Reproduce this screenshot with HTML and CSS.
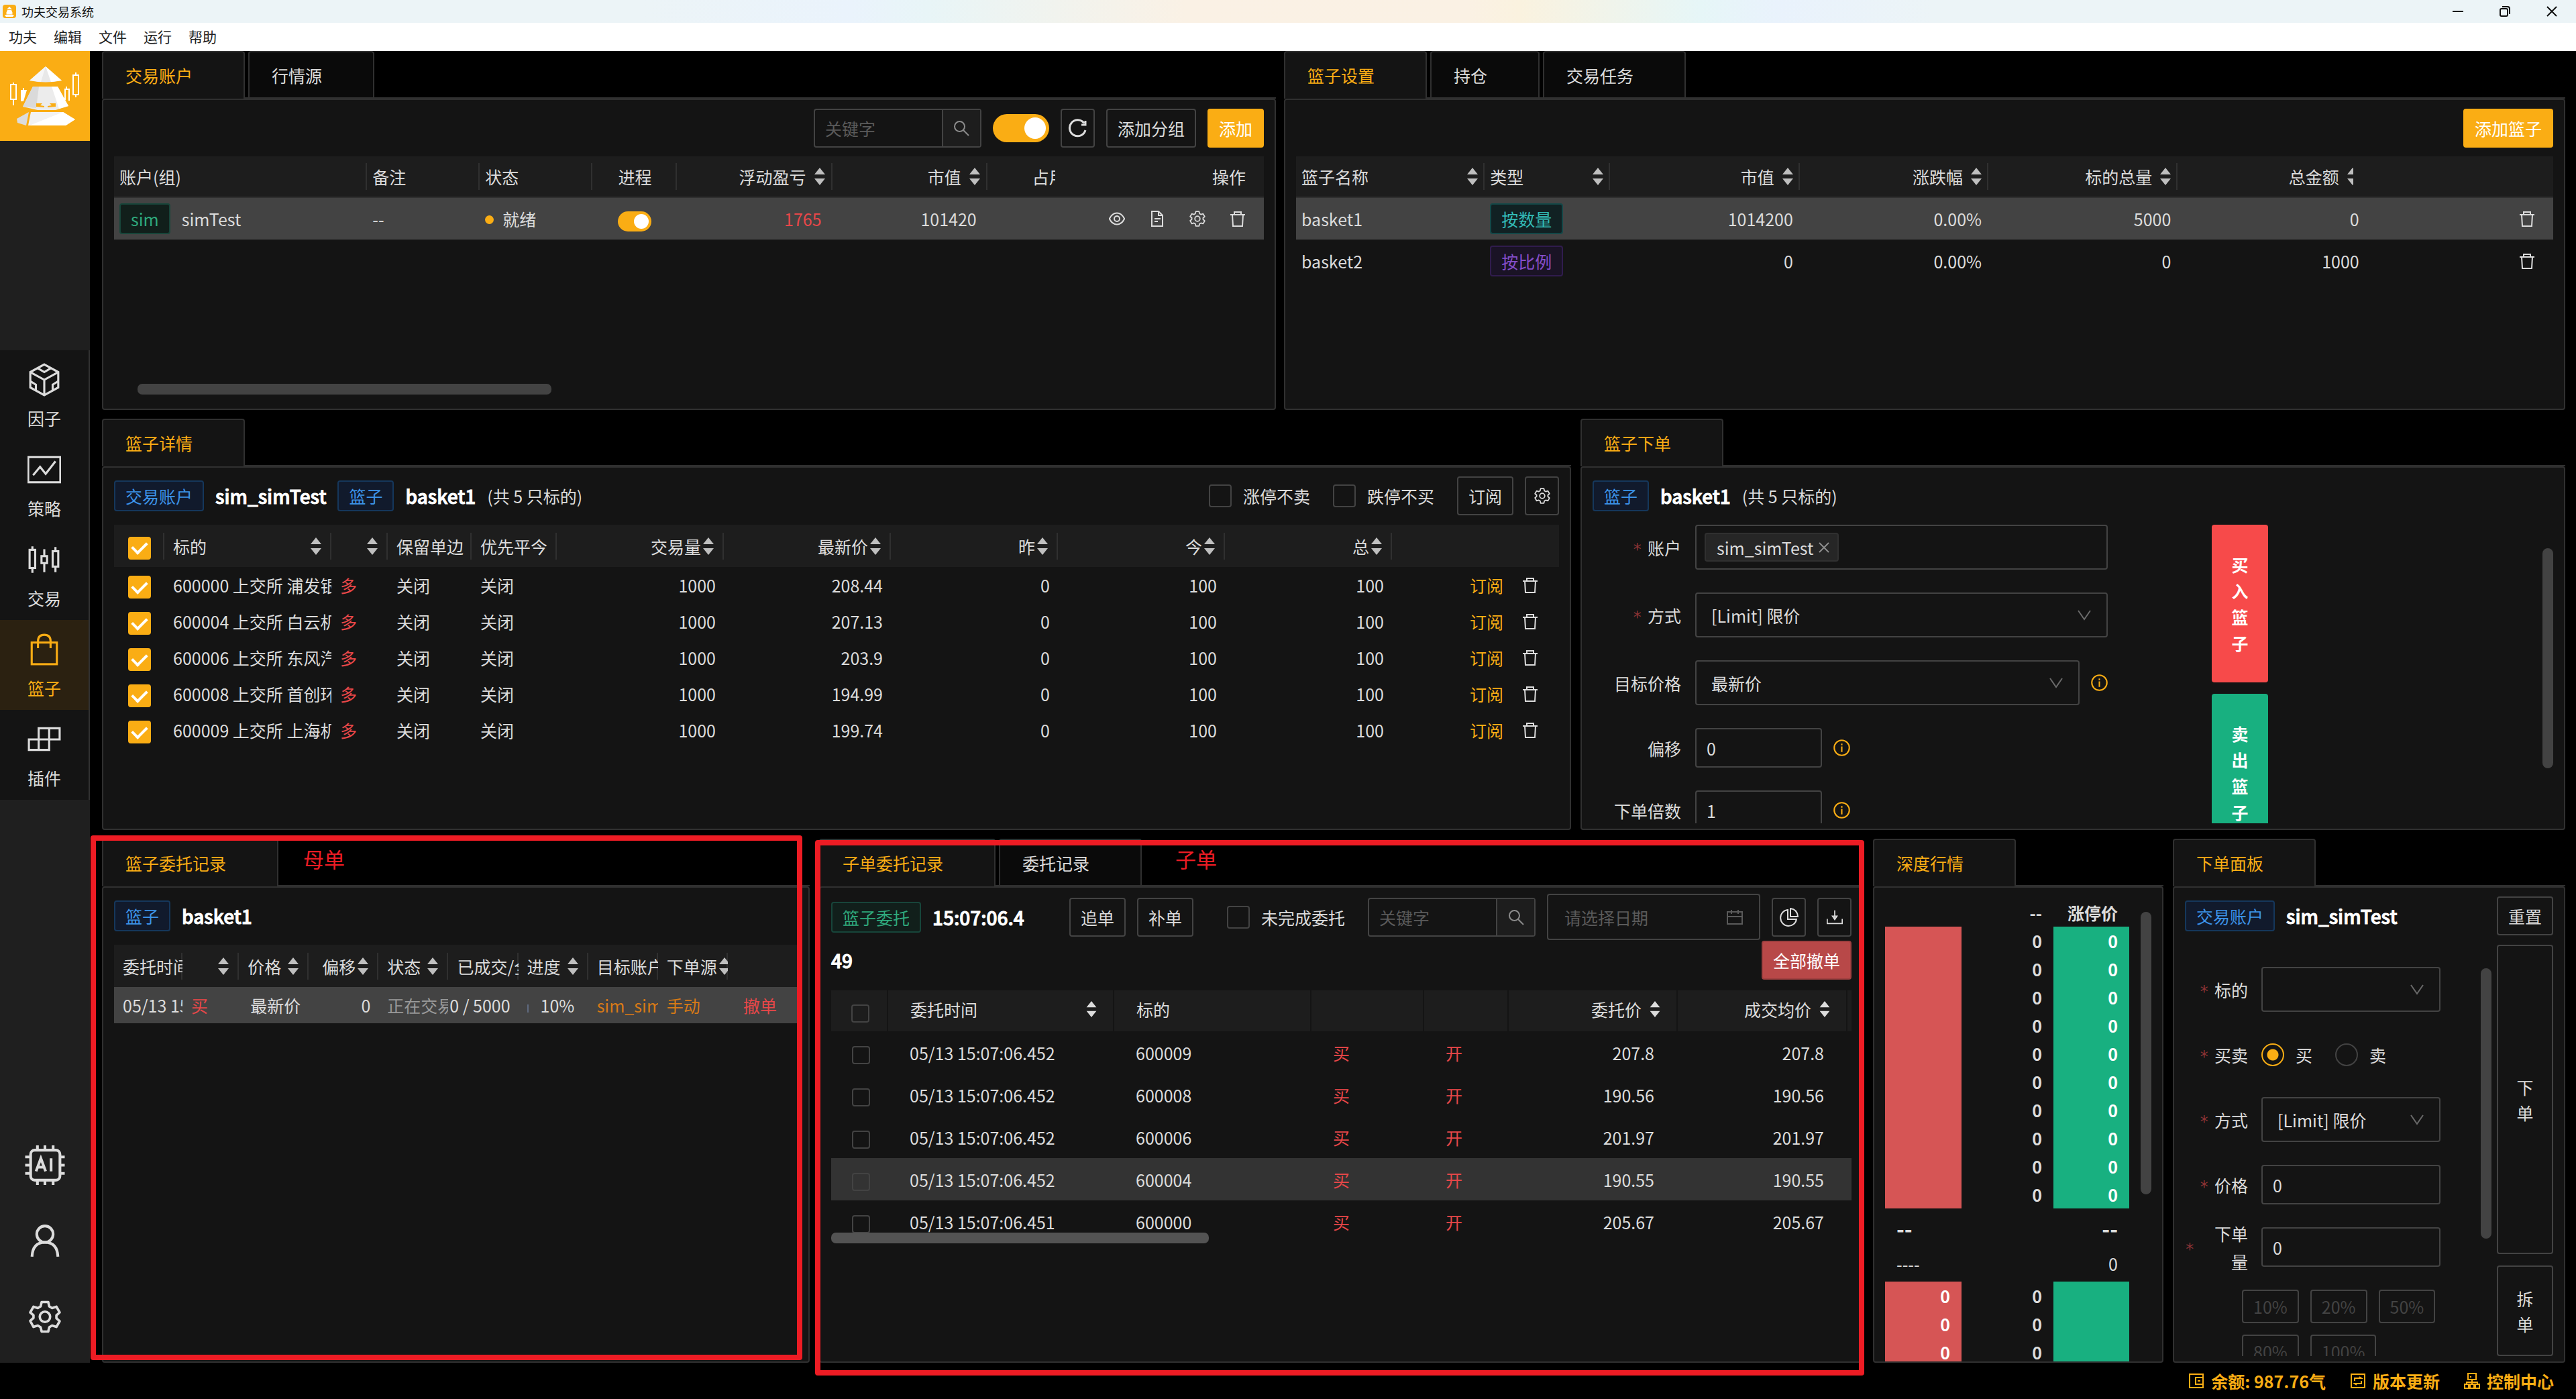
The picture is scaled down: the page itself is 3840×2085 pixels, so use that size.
FILE: index.html
```
<!DOCTYPE html>
<html lang="zh-CN">
<head>
    <meta charset="UTF-8">
    <meta name="viewport" content="width=device-width, initial-scale=1.0">
    <title>功夫交易系统</title>
    <link rel="stylesheet" href="styles.css">
</head>
<body>
    <!-- 公用图标 -->
    <svg class="sprite" aria-hidden="true">
        <symbol id="i-sort" viewBox="0 0 16 26"><path d="M8 0l8 10H0zM8 26l8-10H0z"/></symbol>
        <symbol id="i-trash" viewBox="0 0 24 24"><g fill="none" stroke="currentColor" stroke-width="2"><path d="M1 6h22M4 6l1 17h14l1-17M7 6V2h10v4"/></g></symbol>
        <symbol id="i-gear" viewBox="0 0 24 24"><g fill="none" stroke="currentColor" stroke-width="1.8" stroke-linejoin="round"><path d="M9.600 1.200h4.800l.8 3.200 2 1.200 3.200-1 2.400 4.200-2.400 2.200v2.000l2.400 2.200-2.400 4.200-3.200-1-2 1.200-.8 3.200H9.600l-.8-3.200-2-1.200-3.200 1L1.200 15l2.400-2.200v-2L1.200 8.800l2.400-4.200 3.200 1 2-1.200z"/><circle cx="12" cy="12" r="3.800"/></g></symbol>
        <symbol id="i-search" viewBox="0 0 24 24"><g fill="none" stroke="currentColor" stroke-width="2"><circle cx="9.500" cy="9.500" r="7.500"/><path d="M15 15l8 8"/></g></symbol>
        <symbol id="i-down" viewBox="0 0 20 16"><path d="M1 1l9 13 9-13" fill="none" stroke="currentColor" stroke-width="2"/></symbol>
        <symbol id="i-info" viewBox="0 0 24 24"><g fill="none" stroke="currentColor" stroke-width="2"><circle cx="12" cy="12" r="10.800"/><path d="M12 10v8M12 6v2.400"/></g></symbol>
    </svg>

    <header class="titlebar">
        <svg class="app-icon" viewBox="0 0 20 20"><rect width="20" height="20" rx="4" fill="#faad14"/><path d="M10 3l4 4H6zM7 8h6l2 5-2 1H7l-2-1zM6 14.500h8l3 1.500-2 2H5l-2-2z" fill="#fff"/></svg>
        <span>功夫交易系统</span>
        <div class="window-buttons">
            <svg viewBox="0 0 16 16"><path d="M0 8h16"/></svg>
            <svg viewBox="0 0 16 16"><rect x="1" y="4" width="11" height="11" rx="2"/><path d="M4 1h8q3 0 3 3v8"/></svg>
            <svg viewBox="0 0 16 16"><path d="M1 1l14 14M15 1L1 15"/></svg>
        </div>
    </header>
    <nav class="menubar">
        <a href="#">功夫</a><a href="#">编辑</a><a href="#">文件</a><a href="#">运行</a><a href="#">帮助</a>
    </nav>

    <div class="workspace">
        <aside class="sidebar">
            <svg class="logo" viewBox="0 0 134 134">
                <rect width="134" height="134" fill="#faad14"/>
                <path d="M68 23L44 44q24 5 48 0z" fill="#e8e8e8"/>
                <path d="M68 23l8 23 16-2z" fill="#fff"/>
                <path d="M68 23L44 44l17 2z" fill="#f6f6f6"/>
                <path d="M49 53h37l16 29-19 6H56l-22-5z" fill="#ececec"/>
                <path d="M49 53l9 0-4 32-20-2z" fill="#dadada"/>
                <path d="M77 53h9l16 29-14 4z" fill="#fff"/>
                <path d="M54 78v5l12 1v-2l-6-1 3-3zM83 78v5l-12 1v-2l6-1-3-3z" fill="#faad14"/>
                <path d="M46 91h48l18 11-14 9H42z" fill="#f2f2f2"/>
                <path d="M94 91l-50 20h54l14-9z" fill="#fff"/>
                <path d="M43 91l-18 10 1 6 13 4z" fill="#dcdcdc"/>
                <g fill="none" stroke="#fff" stroke-width="2">
                    <path d="M20 47v3M20 72v9M113 32v4M113 65v4M35 55v4M99 53v4"/>
                    <rect x="16" y="50" width="8" height="22"/>
                    <rect x="109" y="36" width="8" height="29"/>
                    <path d="M97 73V57h6v17"/>
                </g>
                <path d="M31 58h9l-5 17h-4z" fill="#fff"/>
            </svg>
            <nav class="side-nav">
                <a href="#">
                    <svg viewBox="0 0 48 48"><path d="M24 2l20 11v22L24 46 4 35V13z"/><path d="M4 13l20 11 20-11M24 24v22M14 7l10 6 10-6M4 26l8 5v9M44 26l-8 5v9"/></svg>
                    <span>因子</span>
                </a>
                <a href="#">
                    <svg viewBox="0 0 48 48"><rect x="1" y="6" width="46" height="36"/><path d="M8 32l10-12 8 10 14-18"/></svg>
                    <span>策略</span>
                </a>
                <a href="#">
                    <svg viewBox="0 0 48 48"><rect x="3" y="10" width="8" height="26"/><rect x="20" y="19" width="8" height="10"/><rect x="36" y="12" width="8" height="22"/><path d="M7 5v5M7 36v7M24 9v10M24 29v13M40 6v6M40 34v8"/></svg>
                    <span>交易</span>
                </a>
                <a href="#" class="active">
                    <svg viewBox="0 0 48 48"><rect x="6" y="14" width="36" height="31"/><path d="M15 22V12q0-9 9-9t9 9v10"/></svg>
                    <span>篮子</span>
                </a>
                <a href="#">
                    <svg viewBox="0 0 48 48"><path d="M16 8h30v16H16zM2 24h29v15H2zM31 8v16M16 24v15"/></svg>
                    <span>插件</span>
                </a>
            </nav>
            <div class="side-tools">
                <svg viewBox="0 0 60 60"><rect x="9" y="8" width="43" height="44" rx="6"/><path d="M19 8V1M30 8V1M42 8V1M19 59v-7M30 59v-7M42 59v-7M9 18H1M9 30H1M9 42H1M59 18h-8M59 30h-8M59 42h-8M17 39l7-19 7 19M20 33h8M39 20v19"/></svg>
                <svg viewBox="0 0 60 60"><circle cx="30" cy="20" r="12"/><path d="M11 53q1-21 19-21t19 21"/></svg>
                <svg viewBox="0 0 30 30"><use href="#i-gear" x="3" y="3" width="24" height="24"/></svg>
            </div>
        </aside>

        <main class="boards">
            <div class="board-row row-top">
                <section class="board">
                    <div class="tabs"><a href="#" class="tab active">交易账户</a><a href="#" class="tab">行情源</a></div>
                    <div class="panel">
                        <div class="toolbar">
                            <div class="search"><input type="text" placeholder="关键字" aria-label="关键字"><button aria-label="搜索"><svg class="icon"><use href="#i-search"/></svg></button></div>
                            <input type="checkbox" class="switch" aria-label="全部进程" checked>
                            <button class="btn square" aria-label="刷新"><svg class="icon refresh" viewBox="0 0 28 28"><path d="M24 6.500A12 12 0 1 0 26 17M26 3v6h-6"/></svg></button>
                            <button class="btn">添加分组</button>
                            <button class="btn primary">添加</button>
                        </div>
                        <table class="grid accounts">
                            <colgroup><col><col><col><col><col><col><col><col></colgroup>
                            <thead>
                                <tr>
                                    <th>账户(组)</th>
                                    <th>备注</th>
                                    <th>状态</th>
                                    <th class="center">进程</th>
                                    <th class="num"><div class="th">浮动盈亏<svg class="sort"><use href="#i-sort"/></svg></div></th>
                                    <th class="num"><div class="th">市值<svg class="sort"><use href="#i-sort"/></svg></div></th>
                                    <th class="clipped">占用</th>
                                    <th class="num ops">操作</th>
                                </tr>
                            </thead>
                            <tbody>
                                <tr class="selected">
                                    <td><span class="tag green">sim</span><span class="name">simTest</span></td>
                                    <td>--</td>
                                    <td><span class="dot"></span>就绪</td>
                                    <td class="center"><input type="checkbox" class="switch small" aria-label="进程" checked></td>
                                    <td class="num red">1765</td>
                                    <td class="num">101420</td>
                                    <td></td>
                                    <td class="num ops">
                                        <div class="actions">
                                            <svg class="icon" viewBox="0 0 24 24"><path d="M0.800 12Q5 3.500 12 3.500T23.200 12Q19 20.500 12 20.500T.8 12z"/><circle cx="12" cy="12" r="4"/></svg>
                                            <svg class="icon" viewBox="0 0 24 24"><path d="M4 1h10l6 6v16H4zM14 1v6h6M8 12h9M8 16h5"/></svg>
                                            <svg class="icon"><use href="#i-gear"/></svg>
                                            <svg class="icon"><use href="#i-trash"/></svg>
                                        </div>
                                    </td>
                                </tr>
                            </tbody>
                        </table>
                        <div class="hscroll accounts-scroll"></div>
                    </div>
                </section>

                <section class="board">
                    <div class="tabs"><a href="#" class="tab active">篮子设置</a><a href="#" class="tab">持仓</a><a href="#" class="tab">交易任务</a></div>
                    <div class="panel">
                        <div class="toolbar"><button class="btn primary">添加篮子</button></div>
                        <table class="grid baskets">
                            <colgroup><col><col><col><col><col><col><col></colgroup>
                            <thead>
                                <tr>
                                    <th><div class="th">篮子名称<svg class="sort"><use href="#i-sort"/></svg></div></th>
                                    <th><div class="th">类型<svg class="sort"><use href="#i-sort"/></svg></div></th>
                                    <th class="num"><div class="th">市值<svg class="sort"><use href="#i-sort"/></svg></div></th>
                                    <th class="num"><div class="th">涨跌幅<svg class="sort"><use href="#i-sort"/></svg></div></th>
                                    <th class="num"><div class="th">标的总量<svg class="sort"><use href="#i-sort"/></svg></div></th>
                                    <th class="num cut"><div class="th">总金额<span class="half"><svg class="sort"><use href="#i-sort"/></svg></span></div></th>
                                    <th class="ops"></th>
                                </tr>
                            </thead>
                            <tbody>
                                <tr class="selected">
                                    <td>basket1</td>
                                    <td><span class="tag cyan">按数量</span></td>
                                    <td class="num">1014200</td>
                                    <td class="num">0.00%</td>
                                    <td class="num">5000</td>
                                    <td class="num">0</td>
                                    <td class="num ops"><div class="actions"><svg class="icon"><use href="#i-trash"/></svg></div></td>
                                </tr>
                                <tr>
                                    <td>basket2</td>
                                    <td><span class="tag purple">按比例</span></td>
                                    <td class="num">0</td>
                                    <td class="num">0.00%</td>
                                    <td class="num">0</td>
                                    <td class="num">1000</td>
                                    <td class="num ops"><div class="actions"><svg class="icon"><use href="#i-trash"/></svg></div></td>
                                </tr>
                            </tbody>
                        </table>
                    </div>
                </section>
            </div>

            <div class="board-row row-middle">
                <section class="board">
                    <div class="tabs"><a href="#" class="tab active">篮子详情</a></div>
                    <div class="panel">
                        <div class="panel-head">
                            <span class="tag blue">交易账户</span><b>sim_simTest</b>
                            <span class="tag blue">篮子</span><b>basket1</b><span>(共 5 只标的)</span>
                            <div class="head-right">
                                <label class="check"><input type="checkbox">涨停不卖</label>
                                <label class="check"><input type="checkbox">跌停不买</label>
                                <button class="btn">订阅</button>
                                <button class="btn square" aria-label="设置"><svg class="icon"><use href="#i-gear"/></svg></button>
                            </div>
                        </div>
                        <table class="grid compact detail">
                            <colgroup><col><col><col><col><col><col><col><col><col><col><col></colgroup>
                            <thead>
                                <tr>
                                    <th class="center"><input type="checkbox" aria-label="全选" checked></th>
                                    <th><div class="th">标的<svg class="sort"><use href="#i-sort"/></svg></div></th>
                                    <th><div class="th"><span></span><svg class="sort"><use href="#i-sort"/></svg></div></th>
                                    <th>保留单边</th>
                                    <th>优先平今</th>
                                    <th class="num"><div class="th">交易量<svg class="sort"><use href="#i-sort"/></svg></div></th>
                                    <th class="num"><div class="th">最新价<svg class="sort"><use href="#i-sort"/></svg></div></th>
                                    <th class="num"><div class="th">昨<svg class="sort"><use href="#i-sort"/></svg></div></th>
                                    <th class="num"><div class="th">今<svg class="sort"><use href="#i-sort"/></svg></div></th>
                                    <th class="num"><div class="th">总<svg class="sort"><use href="#i-sort"/></svg></div></th>
                                    <th></th>
                                </tr>
                            </thead>
                            <tbody>
                                <tr>
                                    <td class="center"><input type="checkbox" aria-label="600000" checked></td>
                                    <td>600000 上交所 浦发银行</td><td class="red">多</td><td>关闭</td><td>关闭</td>
                                    <td class="num">1000</td><td class="num">208.44</td><td class="num">0</td><td class="num">100</td><td class="num">100</td>
                                    <td class="ops"><div class="actions"><a href="#">订阅</a><svg class="icon"><use href="#i-trash"/></svg></div></td>
                                </tr>
                                <tr>
                                    <td class="center"><input type="checkbox" aria-label="600004" checked></td>
                                    <td>600004 上交所 白云机场</td><td class="red">多</td><td>关闭</td><td>关闭</td>
                                    <td class="num">1000</td><td class="num">207.13</td><td class="num">0</td><td class="num">100</td><td class="num">100</td>
                                    <td class="ops"><div class="actions"><a href="#">订阅</a><svg class="icon"><use href="#i-trash"/></svg></div></td>
                                </tr>
                                <tr>
                                    <td class="center"><input type="checkbox" aria-label="600006" checked></td>
                                    <td>600006 上交所 东风汽车</td><td class="red">多</td><td>关闭</td><td>关闭</td>
                                    <td class="num">1000</td><td class="num">203.9</td><td class="num">0</td><td class="num">100</td><td class="num">100</td>
                                    <td class="ops"><div class="actions"><a href="#">订阅</a><svg class="icon"><use href="#i-trash"/></svg></div></td>
                                </tr>
                                <tr>
                                    <td class="center"><input type="checkbox" aria-label="600008" checked></td>
                                    <td>600008 上交所 首创环保</td><td class="red">多</td><td>关闭</td><td>关闭</td>
                                    <td class="num">1000</td><td class="num">194.99</td><td class="num">0</td><td class="num">100</td><td class="num">100</td>
                                    <td class="ops"><div class="actions"><a href="#">订阅</a><svg class="icon"><use href="#i-trash"/></svg></div></td>
                                </tr>
                                <tr>
                                    <td class="center"><input type="checkbox" aria-label="600009" checked></td>
                                    <td>600009 上交所 上海机场</td><td class="red">多</td><td>关闭</td><td>关闭</td>
                                    <td class="num">1000</td><td class="num">199.74</td><td class="num">0</td><td class="num">100</td><td class="num">100</td>
                                    <td class="ops"><div class="actions"><a href="#">订阅</a><svg class="icon"><use href="#i-trash"/></svg></div></td>
                                </tr>
                            </tbody>
                        </table>
                    </div>
                </section>

                <section class="board">
                    <div class="tabs"><a href="#" class="tab active">篮子下单</a></div>
                    <div class="panel">
                        <div class="panel-head"><span class="tag blue">篮子</span><b>basket1</b><span>(共 5 只标的)</span></div>
                        <div class="order-body">
                            <form class="form basket-form">
                                <div class="field">
                                    <label for="account"><i>*</i>账户</label>
                                    <div class="control tall multi" id="account"><span class="chip">sim_simTest<svg viewBox="0 0 16 16"><path d="M1 1l14 14M15 1L1 15"/></svg></span></div>
                                </div>
                                <div class="field">
                                    <label for="method"><i>*</i>方式</label>
                                    <div class="select"><select id="method"><option>[Limit] 限价</option></select><svg><use href="#i-down"/></svg></div>
                                </div>
                                <div class="field">
                                    <label for="target">目标价格</label>
                                    <div class="select"><select id="target"><option>最新价</option></select><svg><use href="#i-down"/></svg></div>
                                    <svg class="info"><use href="#i-info"/></svg>
                                </div>
                                <div class="field">
                                    <label for="offset">偏移</label>
                                    <input class="control short" id="offset" type="text" value="0">
                                    <svg class="info"><use href="#i-info"/></svg>
                                </div>
                                <div class="field">
                                    <label for="times">下单倍数</label>
                                    <input class="control short" id="times" type="text" value="1">
                                    <svg class="info"><use href="#i-info"/></svg>
                                </div>
                            </form>
                            <div class="trade-buttons">
                                <button class="buy">买入篮子</button>
                                <button class="sell">卖出篮子</button>
                            </div>
                            <div class="vscroll"></div>
                        </div>
                    </div>
                </section>
            </div>

            <div class="board-row row-bottom">
                <section class="board">
                    <div class="tabs"><a href="#" class="tab active">篮子委托记录</a></div>
                    <div class="panel">
                        <div class="panel-head"><span class="tag blue">篮子</span><b>basket1</b></div>
                        <table class="grid compact parents">
                            <colgroup><col><col><col><col><col><col><col><col><col><col></colgroup>
                            <thead>
                                <tr>
                                    <th>委托时间</th>
                                    <th><div class="th"><span></span><svg class="sort"><use href="#i-sort"/></svg></div></th>
                                    <th><div class="th">价格<svg class="sort"><use href="#i-sort"/></svg></div></th>
                                    <th class="num"><div class="th">偏移<svg class="sort"><use href="#i-sort"/></svg></div></th>
                                    <th><div class="th">状态<svg class="sort"><use href="#i-sort"/></svg></div></th>
                                    <th>已成交/全部</th>
                                    <th><div class="th">进度<svg class="sort"><use href="#i-sort"/></svg></div></th>
                                    <th>目标账户</th>
                                    <th><div class="th flush">下单源<svg class="sort"><use href="#i-sort"/></svg></div></th>
                                    <th></th>
                                </tr>
                            </thead>
                            <tbody>
                                <tr class="selected">
                                    <td>05/13 15:07:06</td>
                                    <td class="red">买</td>
                                    <td class="num">最新价</td>
                                    <td class="num">0</td>
                                    <td class="muted">正在交易</td>
                                    <td class="num">0 / 5000</td>
                                    <td><span class="progress"></span>10%</td>
                                    <td class="orange">sim_simTest</td>
                                    <td class="orange">手动</td>
                                    <td class="num ops red">撤单</td>
                                </tr>
                            </tbody>
                        </table>
                    </div>
                    <div class="mark mark-parent"></div>
                    <span class="mark-text mark-text-parent">母单</span>
                </section>

                <section class="board">
                    <div class="tabs"><a href="#" class="tab active">子单委托记录</a><a href="#" class="tab">委托记录</a></div>
                    <div class="panel child-panel">
                        <div class="child-head">
                            <div class="child-title"><span class="tag green">篮子委托</span><b>15:07:06.4</b></div>
                            <div class="child-tools">
                                <button class="btn">追单</button>
                                <button class="btn">补单</button>
                                <label class="check"><input type="checkbox">未完成委托</label>
                                <div class="search"><input type="text" placeholder="关键字" aria-label="关键字"><button aria-label="搜索"><svg class="icon"><use href="#i-search"/></svg></button></div>
                                <div class="date"><input type="text" placeholder="请选择日期" aria-label="请选择日期"><svg class="icon" viewBox="0 0 24 24"><path d="M1 4h22v18H1zM1 11h22M7 1v6M17 1v6"/></svg></div>
                                <button class="btn square" aria-label="统计"><svg class="icon pie" viewBox="0 0 28 28"><path d="M12 3a12 12 0 1 0 13 14H12zM16 1v12h11Q26 2 16 1z"/></svg></button>
                                <button class="btn square" aria-label="下载"><svg class="icon" viewBox="0 0 28 28"><path d="M1 17v8h26v-8M14 2v15M10 12l4 6 4-6z"/></svg></button>
                            </div>
                        </div>
                        <div class="child-head second"><b>49</b><button class="btn danger">全部撤单</button></div>
                        <div class="child-table">
                            <table class="grid children">
                                <colgroup><col><col><col><col><col><col><col><col></colgroup>
                                <thead>
                                    <tr>
                                        <th class="center"><input type="checkbox" aria-label="全选"></th>
                                        <th><div class="th">委托时间<svg class="sort"><use href="#i-sort"/></svg></div></th>
                                        <th>标的</th>
                                        <th></th>
                                        <th></th>
                                        <th class="num"><div class="th">委托价<svg class="sort"><use href="#i-sort"/></svg></div></th>
                                        <th class="num"><div class="th">成交均价<svg class="sort"><use href="#i-sort"/></svg></div></th>
                                        <th></th>
                                    </tr>
                                </thead>
                                <tbody>
                                    <tr><td class="center"><input type="checkbox" aria-label="600009"></td><td>05/13 15:07:06.452</td><td>600009</td><td class="red">买</td><td class="red">开</td><td class="num">207.8</td><td class="num">207.8</td><td></td></tr>
                                    <tr><td class="center"><input type="checkbox" aria-label="600008"></td><td>05/13 15:07:06.452</td><td>600008</td><td class="red">买</td><td class="red">开</td><td class="num">190.56</td><td class="num">190.56</td><td></td></tr>
                                    <tr><td class="center"><input type="checkbox" aria-label="600006"></td><td>05/13 15:07:06.452</td><td>600006</td><td class="red">买</td><td class="red">开</td><td class="num">201.97</td><td class="num">201.97</td><td></td></tr>
                                    <tr class="hover"><td class="center"><input type="checkbox" aria-label="600004"></td><td>05/13 15:07:06.452</td><td>600004</td><td class="red">买</td><td class="red">开</td><td class="num">190.55</td><td class="num">190.55</td><td></td></tr>
                                    <tr><td class="center"><input type="checkbox" aria-label="600000"></td><td>05/13 15:07:06.451</td><td>600000</td><td class="red">买</td><td class="red">开</td><td class="num">205.67</td><td class="num">205.67</td><td></td></tr>
                                </tbody>
                            </table>
                        </div>
                        <div class="hscroll children-scroll"></div>
                    </div>
                    <div class="mark mark-child"></div>
                    <span class="mark-text mark-text-child">子单</span>
                </section>

                <section class="board">
                    <div class="tabs"><a href="#" class="tab active">深度行情</a></div>
                    <div class="panel depth-panel">
                        <table class="depth">
                            <colgroup><col><col><col></colgroup>
                            <tbody>
                                <tr class="limit"><td></td><td>--</td><td>涨停价</td></tr>
                                <tr><td class="bid"></td><td>0</td><td class="ask">0</td></tr>
                                <tr><td class="bid"></td><td>0</td><td class="ask">0</td></tr>
                                <tr><td class="bid"></td><td>0</td><td class="ask">0</td></tr>
                                <tr><td class="bid"></td><td>0</td><td class="ask">0</td></tr>
                                <tr><td class="bid"></td><td>0</td><td class="ask">0</td></tr>
                                <tr><td class="bid"></td><td>0</td><td class="ask">0</td></tr>
                                <tr><td class="bid"></td><td>0</td><td class="ask">0</td></tr>
                                <tr><td class="bid"></td><td>0</td><td class="ask">0</td></tr>
                                <tr><td class="bid"></td><td>0</td><td class="ask">0</td></tr>
                                <tr><td class="bid"></td><td>0</td><td class="ask">0</td></tr>
                                <tr class="last-price"><td>--</td><td></td><td>--</td></tr>
                                <tr class="change"><td>----</td><td></td><td>0</td></tr>
                                <tr><td class="bid">0</td><td>0</td><td class="ask"></td></tr>
                                <tr><td class="bid">0</td><td>0</td><td class="ask"></td></tr>
                                <tr><td class="bid">0</td><td>0</td><td class="ask"></td></tr>
                            </tbody>
                        </table>
                        <div class="vscroll"></div>
                    </div>
                </section>

                <section class="board">
                    <div class="tabs"><a href="#" class="tab active">下单面板</a></div>
                    <div class="panel">
                        <div class="panel-head">
                            <span class="tag blue">交易账户</span><b>sim_simTest</b>
                            <div class="head-right"><button class="btn">重置</button></div>
                        </div>
                        <div class="ticket">
                            <form class="form ticket-form">
                                <div class="field">
                                    <label for="symbol"><i>*</i>标的</label>
                                    <div class="select"><select id="symbol"><option></option></select><svg><use href="#i-down"/></svg></div>
                                </div>
                                <div class="field side">
                                    <label><i>*</i>买卖</label>
                                    <div class="radios">
                                        <label><input type="radio" name="side" checked>买</label>
                                        <label><input type="radio" name="side">卖</label>
                                    </div>
                                </div>
                                <div class="field">
                                    <label for="type"><i>*</i>方式</label>
                                    <div class="select"><select id="type"><option>[Limit] 限价</option></select><svg><use href="#i-down"/></svg></div>
                                </div>
                                <div class="field">
                                    <label for="price"><i>*</i>价格</label>
                                    <input class="control" id="price" type="text" value="0">
                                </div>
                                <div class="field volume">
                                    <label for="volume"><i>*</i><span>下单量</span></label>
                                    <input class="control" id="volume" type="text" value="0">
                                </div>
                                <div class="percents">
                                    <button type="button" disabled>10%</button>
                                    <button type="button" disabled>20%</button>
                                    <button type="button" disabled>50%</button>
                                    <button type="button" disabled>80%</button>
                                    <button type="button" disabled>100%</button>
                                </div>
                            </form>
                            <div class="vscroll"></div>
                            <div class="ticket-buttons">
                                <button class="btn">下单</button>
                                <button class="btn split">拆单</button>
                            </div>
                        </div>
                    </div>
                </section>
            </div>
        </main>
    </div>

    <footer class="statusbar">
        <a href="#"><svg viewBox="0 0 24 24"><path d="M22 6V2H2v20h20v-4M22 7H11v10h11zM14 12h4"/></svg>余额: 987.76气</a>
        <a href="#"><svg viewBox="0 0 24 24"><path d="M2 2h20v20H2zM7 12V8h10l-3-2M17 12v4H7l3 2"/></svg>版本更新</a>
        <a href="#"><svg viewBox="0 0 24 24"><path d="M6 1h12v9H6zM9 6h2M12 10v5M4 17v-3h16v3M12 14v3M1 17h6v6H1zM9 17h6v6H9zM17 17h6v6h-6z"/></svg>控制中心</a>
    </footer>
</body>
</html>
```
FILE: styles.css
```
* {
    box-sizing: border-box;
}
body {
    margin: 0;
    height: 100vh;
    display: flex;
    flex-direction: column;
    overflow: hidden;
    background: #000;
    color: #dcdcdc;
    font-family: "Noto Sans CJK SC", sans-serif;
    font-size: 25px;
    line-height: 38px;
}
button, input, select {
    margin: 0;
    font: inherit;
    color: inherit;
}
a {
    color: inherit;
    text-decoration: none;
}
.sprite {
    display: none;
}
.icon {
    display: block;
    width: 24px;
    height: 24px;
    fill: none;
    stroke: currentColor;
    stroke-width: 2;
}

/* 窗口标题与菜单 */
.titlebar {
    flex: none;
    height: 34px;
    display: flex;
    align-items: center;
    gap: 8px;
    padding: 0 28px 0 4px;
    background: linear-gradient(90deg, #ecf4f7 25%, #eaf3fc 33%, #e8f5f7 36%, #faf1e5 46%, #faf1e4 57%, #faf2df 59%, #e6f6f7 66%, #e9f2fc 69%, #ecf4f7 75%);
    color: #111;
    font-size: 18px;
    line-height: 34px;
}
.app-icon {
    width: 20px;
    height: 20px;
}
.window-buttons {
    margin-left: auto;
    display: flex;
    gap: 54px;
}
.window-buttons svg {
    width: 16px;
    height: 16px;
    fill: none;
    stroke: #111;
    stroke-width: 2;
}
.menubar {
    flex: none;
    height: 42px;
    display: flex;
    gap: 25px;
    padding-left: 13px;
    background: #fff;
    color: #222;
    font-size: 21px;
    line-height: 40px;
}

.workspace {
    flex: 1;
    min-height: 0;
    display: flex;
}

/* 侧边栏 */
.sidebar {
    width: 134px;
    display: flex;
    flex-direction: column;
    background: #1f1f1f;
}
.logo {
    width: 134px;
    height: 134px;
}
.side-nav {
    margin-top: 312px;
    background: #141414;
    border-right: 2px solid #303030;
}
.side-nav a {
    height: 134px;
    display: flex;
    flex-direction: column;
    align-items: center;
    justify-content: center;
    gap: 13px;
    padding-top: 4px;
}
.side-nav svg {
    width: 50px;
    height: 50px;
    fill: none;
    stroke: currentColor;
    stroke-width: 3;
}
.side-nav .active {
    background: #2b2111;
    color: #faad14;
}
.side-tools {
    margin-top: auto;
    padding-bottom: 38px;
    display: flex;
    flex-direction: column;
    align-items: center;
    gap: 52px;
}
.side-tools svg {
    width: 62px;
    height: 61px;
    fill: none;
    stroke: currentColor;
    stroke-width: 4;
}

/* 面板 */
.boards {
    flex: 1;
    min-width: 0;
    padding: 0 16px 0 18px;
    display: grid;
    grid-template-rows: 535fr 613fr 781fr;
    gap: 13px;
}
.board-row {
    min-height: 0;
    display: grid;
    gap: 14px;
}
.row-top {
    grid-template-columns: 1750fr 1910fr;
    gap: 12px;
}
.row-middle {
    grid-template-columns: 2190fr 1468fr;
}
.row-bottom {
    grid-template-columns: 1055fr 1557fr 433fr 585fr;
}
.board {
    position: relative;
    min-width: 0;
    min-height: 0;
    display: flex;
    flex-direction: column;
}
.tabs {
    height: 71px;
    flex: none;
    display: flex;
    gap: 5px;
    border-bottom: 2px solid #303030;
}
.tab {
    padding: 0 76px 0 33px;
    background: #0a0a0a;
    border: 2px solid #303030;
    border-bottom: 0;
    border-radius: 4px 4px 0 0;
    line-height: 68px;
}
.tab.active {
    height: 71px;
    background: #141414;
    color: #faad14;
}
.panel {
    flex: 1;
    min-height: 0;
    display: flex;
    flex-direction: column;
    padding: 13px 16px 8px;
    background: #141414;
    border: 2px solid #303030;
    border-radius: 4px;
    overflow: hidden;
}
.toolbar {
    display: flex;
    justify-content: flex-end;
    align-items: center;
    gap: 17px;
    margin-bottom: 13px;
}
.panel-head {
    flex: none;
    height: 58px;
    display: flex;
    align-items: center;
    gap: 17px;
    margin-bottom: 14px;
    white-space: nowrap;
}
.panel-head b, .child-head b {
    color: #fff;
    font-size: 28px;
    font-weight: 500;
    -webkit-text-stroke: 1px #fff;
}
.head-right {
    margin-left: auto;
    display: flex;
    align-items: center;
    gap: 17px;
}

/* 按钮与输入 */
.btn {
    height: 58px;
    padding: 0 15px;
    background: #141414;
    border: 2px solid #434343;
    border-radius: 4px;
    white-space: nowrap;
}
.btn.primary {
    background: #faad14;
    border-color: #faad14;
    color: #fff;
}
.btn.danger {
    background: #b84848;
    border-color: #a04040;
    color: #fff;
}
.btn.square {
    width: 51px;
    padding: 0;
    display: grid;
    place-items: center;
}
.refresh, .pie {
    width: 28px;
    height: 28px;
}
.refresh {
    stroke-width: 3;
}
.search {
    display: flex;
    height: 58px;
    width: 250px;
    border: 2px solid #434343;
    border-radius: 4px;
}
.search input {
    flex: 1;
    min-width: 0;
    padding: 0 15px;
    background: none;
    border: 0;
}
.search button {
    width: 57px;
    padding: 0;
    display: grid;
    place-items: center;
    background: #1d1d1d;
    border: 0;
    border-left: 2px solid #434343;
    color: #8c8c8c;
}
::placeholder {
    color: #5a5a5a;
    opacity: 1;
}
.switch {
    appearance: none;
    width: 84px;
    height: 42px;
    padding: 5px;
    display: inline-flex;
    justify-content: flex-end;
    border-radius: 21px;
    background: #faad14;
}
.switch::after {
    content: "";
    width: 32px;
    height: 32px;
    border-radius: 50%;
    background: #fff;
}
.switch.small {
    width: 50px;
    height: 30px;
    padding: 4px;
    vertical-align: middle;
}
.switch.small::after {
    width: 22px;
    height: 22px;
}
input[type=checkbox]:not(.switch) {
    appearance: none;
    width: 34px;
    height: 34px;
    display: inline-grid;
    place-items: center;
    vertical-align: middle;
    border: 2px solid #434343;
    border-radius: 4px;
}
input[type=checkbox]:not(.switch):checked {
    background: #faad14;
    border-color: #faad14;
}
input[type=checkbox]:not(.switch):checked::after {
    content: "";
    width: 10px;
    height: 18px;
    margin-bottom: 5px;
    border: solid #fff;
    border-width: 0 4px 4px 0;
    transform: rotate(45deg);
}
.check {
    display: flex;
    align-items: center;
    gap: 17px;
    margin-right: 17px;
}
.tag {
    display: inline-block;
    height: 46px;
    padding: 0 15px;
    border: 2px solid;
    border-radius: 4px;
    line-height: 42px;
}
.tag.green {
    background: #111f1b;
    border-color: #17453a;
    color: #2fa97d;
}
.tag.cyan {
    background: #112123;
    border-color: #144848;
    color: #33bcb7;
}
.tag.purple {
    background: #1a1325;
    border-color: #301c4d;
    color: #854eca;
}
.tag.blue {
    background: #111a2c;
    border-color: #15375b;
    color: #3c93e8;
}
.name {
    margin-left: 17px;
}
.dot {
    display: inline-block;
    width: 13px;
    height: 13px;
    margin-right: 13px;
    border-radius: 50%;
    background: #faad14;
    vertical-align: 3px;
}
.red {
    color: #e84749;
}
.orange {
    color: #d87a16;
}
.muted {
    color: #999;
}

/* 表格 */
.grid {
    width: 100%;
    table-layout: fixed;
    border-collapse: collapse;
}
.grid th, .grid td {
    padding: 0 0 0 8px;
    overflow: hidden;
    white-space: nowrap;
    text-align: left;
    font-weight: 400;
}
.grid th {
    height: 61px;
    background: linear-gradient(#303030, #303030) right center / 2px 40px no-repeat #1d1d1d;
    border-bottom: 2px solid #303030;
}
.grid th:last-child {
    background: #1d1d1d;
}
.grid td {
    height: 63px;
}
.grid .selected {
    background: #434343;
}
.grid .hover {
    background: #333;
}
.grid .center {
    padding: 0;
    text-align: center;
}
.grid .num {
    padding-left: 0;
    text-align: right;
}
.th {
    display: flex;
    align-items: center;
    justify-content: space-between;
}
.num .th {
    justify-content: flex-end;
    gap: 12px;
}
.sort {
    flex: none;
    width: 16px;
    height: 26px;
    fill: #bfbfbf;
}
.actions {
    display: flex;
    align-items: center;
    justify-content: flex-end;
    gap: 36px;
}

.accounts th { padding-right: 11px; }
.accounts td { padding-right: 16px; }
.accounts .ops { padding-right: 27px; }
.grid.accounts .clipped { padding: 0 0 0 67px; background: #1d1d1d; text-overflow: clip; }
.accounts .clipped + th { background: #1d1d1d; }
.accounts col:nth-child(1) { width: 377px; }
.accounts col:nth-child(2) { width: 168px; }
.accounts col:nth-child(3) { width: 168px; }
.accounts col:nth-child(4) { width: 126px; }
.accounts col:nth-child(5) { width: 231px; }
.accounts col:nth-child(6) { width: 231px; }
.accounts col:nth-child(7) { width: 101px; }
.accounts col:nth-child(8) { width: 311px; }

.baskets th { padding-right: 10px; }
.baskets td { padding-right: 10px; }
.baskets .ops { padding-right: 27px; }
.baskets th.cut { padding-right: 19px; background: #1d1d1d; }
.half { width: 9px; height: 26px; overflow: hidden; }
.half .sort { display: block; }
.baskets col:nth-child(1) { width: 281px; }
.baskets col:nth-child(2) { width: 187px; }
.baskets col:nth-child(3) { width: 282px; }
.baskets col:nth-child(4) { width: 281px; }
.baskets col:nth-child(5) { width: 282px; }
.baskets col:nth-child(6) { width: 280px; }
.baskets col:nth-child(7) { width: 279px; }

.compact th, .compact td { padding-left: 13px; }
.compact th { height: 63px; border-bottom: 0; }
.compact td { height: 54px; }
.compact .th { padding-right: 15px; }
.compact .num .th { gap: 3px; }
.compact td.num { padding-right: 12px; }
.compact .actions { gap: 28px; padding-right: 31px; }
.detail .actions a { color: #faad14; }
.detail col { width: 249px; }
.detail col:nth-child(1) { width: 75px; }
.detail col:nth-child(3) { width: 84px; }
.detail col:nth-child(4) { width: 125px; }
.detail col:nth-child(5) { width: 127px; }
.parents col { width: 104px; }
.parents col:nth-child(1) { width: 102px; }
.parents col:nth-child(2) { width: 84px; }
.parents .flush { justify-content: flex-start; gap: 3px; padding: 0; }
.parents td.ops { padding-right: 31px; }
.progress {
    display: inline-block;
    width: 2px;
    height: 12px;
    margin-right: 18px;
    background: #5f6b80;
}

.child-panel {
    padding-top: 9px;
}
.child-head {
    flex: none;
    height: 69px;
    display: flex;
    align-items: center;
    justify-content: space-between;
    white-space: nowrap;
}
.child-head.second {
    height: 58px;
    margin: 1px 0 16px;
}
.child-title, .child-tools {
    display: flex;
    align-items: center;
    gap: 17px;
}
.child-tools .check {
    margin: 0 17px 0 33px;
}
.date {
    display: flex;
    align-items: center;
    width: 318px;
    height: 69px;
    padding-right: 24px;
    border: 2px solid #434343;
    border-radius: 4px;
}
.date input {
    flex: 1;
    min-width: 0;
    padding: 0 0 0 24px;
    background: none;
    border: 0;
}
.date .icon {
    color: #5a5a5a;
}
.child-table {
    flex: none;
    height: 361px;
    overflow: hidden;
}
.children th, .children td { padding-left: 33px; }
.children th {
    padding-bottom: 6px;
    background: #1d1d1d;
    border: 0;
    border-right: 2px dotted #141414;
}
.children th:last-child { border: 0; }
.children .th { padding-right: 24px; }
.children td.num { padding-right: 34px; }
.children .sort { fill: #dcdcdc; height: 24px; }
.grid.children .center { padding-left: 4px; }
.grid.children input { width: 27px; height: 27px; }
.children col:nth-child(1) { width: 84px; }
.children col:nth-child(2) { width: 337px; }
.children col:nth-child(3) { width: 294px; }
.children col:nth-child(4) { width: 168px; }
.children col:nth-child(5) { width: 126px; }
.children col:nth-child(6) { width: 252px; }
.children col:nth-child(7) { width: 253px; }
.children col:nth-child(8) { width: 8px; }

/* 滚动条 */
.hscroll {
    height: 16px;
    border-radius: 7px;
    background: #434343;
}
.accounts-scroll {
    width: 36%;
    margin: auto 0 13px 35px;
}
.children-scroll {
    width: 37%;
    background: #535353;
}
.vscroll {
    width: 16px;
    border-radius: 8px;
    background: #434343;
}

/* 表单 */
.order-body {
    flex: 1;
    min-height: 0;
    display: flex;
    overflow: hidden;
}
.order-body .vscroll {
    height: 328px;
    margin: 35px 0 0 auto;
}
.form {
    display: flex;
    flex-direction: column;
    gap: 34px;
}
.basket-form {
    width: 768px;
}
.field {
    flex: none;
    display: flex;
    align-items: center;
}
.field > label {
    flex: none;
    width: 132px;
    margin-right: 21px;
    display: flex;
    align-items: center;
    justify-content: flex-end;
    gap: 8px;
}
.field i {
    padding-top: 7px;
    color: #8a3335;
    font-family: "DejaVu Sans Mono", monospace;
    font-size: 24px;
    font-style: normal;
    line-height: 24px;
}
.control {
    flex: 1;
    min-width: 0;
    height: 59px;
    padding: 0 15px;
    background: #141414;
    border: 2px solid #434343;
    border-radius: 4px;
}
.control.short {
    flex: none;
    width: 189px;
}
.control.tall {
    height: 67px;
}
.multi {
    display: flex;
    align-items: center;
    padding: 0 12px;
}
.chip {
    display: flex;
    align-items: center;
    gap: 8px;
    height: 43px;
    padding: 0 12px 0 16px;
    background: #262626;
    border: 2px solid #303030;
    border-radius: 4px;
}
.chip svg {
    width: 16px;
    height: 16px;
    stroke: #8c8c8c;
    stroke-width: 2;
}
.select {
    flex: 1;
    min-width: 0;
    display: grid;
    align-items: center;
}
.select select {
    grid-area: 1 / 1;
    width: 100%;
    height: 67px;
    padding: 0 22px;
    appearance: none;
    background: #141414;
    border: 2px solid #434343;
    border-radius: 4px;
}
.select svg {
    grid-area: 1 / 1;
    justify-self: end;
    width: 20px;
    height: 16px;
    margin-right: 25px;
    color: #6a6a6a;
    pointer-events: none;
}
.info {
    width: 25px;
    height: 25px;
    margin-left: 17px;
    color: #faad14;
}
.trade-buttons {
    display: flex;
    flex-direction: column;
    gap: 17px;
    margin-left: 155px;
}
.trade-buttons button {
    flex: none;
    width: 84px;
    height: 235px;
    padding: 0 28px;
    border: 0;
    border-radius: 4px;
    color: #fff;
    font-weight: 700;
    line-height: 39px;
}
.buy {
    background: #f74a4a;
}
.sell {
    background: #18b080;
}

/* 深度行情 */
.depth-panel {
    flex-direction: row;
    justify-content: space-between;
    padding-top: 16px;
    padding-bottom: 0;
}
.depth {
    width: 364px;
    height: max-content;
    table-layout: fixed;
    border-collapse: collapse;
    text-align: right;
    font-weight: 700;
}
.depth td {
    height: 42px;
    padding: 0 17px 0 0;
    white-space: nowrap;
}
.depth col:nth-child(1) { width: 114px; }
.depth col:nth-child(2) { width: 137px; }
.depth col:nth-child(3) { width: 113px; }
.depth .bid {
    background: #d65555;
    color: #fff;
}
.depth .ask {
    background: #18b080;
    color: #fff;
}
.last-price {
    font-size: 32px;
}
.depth .last-price td {
    height: 58px;
}
.depth .change td {
    height: 51px;
    padding-bottom: 3px;
    font-weight: 400;
}
.last-price td:first-child, .change td:first-child {
    padding-left: 17px;
    text-align: left;
}
.depth-panel .vscroll {
    height: 421px;
    margin-top: 20px;
}

/* 下单面板 */
.ticket {
    flex: 1;
    min-height: 0;
    display: flex;
    overflow: hidden;
}
.ticket-form {
    flex: 1;
    padding-top: 33px;
    margin-right: 60px;
    min-width: 0;
}
.ticket-form .field > label {
    width: 94px;
    margin-right: 20px;
}
.ticket-form .side {
    height: 59px;
}
.radios, .radios label {
    display: flex;
    align-items: center;
    gap: 17px;
}
.radios {
    gap: 34px;
}
.radios input {
    appearance: none;
    width: 34px;
    height: 34px;
    border: 2px solid #434343;
    border-radius: 50%;
}
.radios input:checked {
    border-color: #faad14;
    background: radial-gradient(circle, #faad14 8px, transparent 9px);
}
.ticket-form .volume {
    height: 59px;
}
.ticket-form .volume label {
    justify-content: space-between;
    text-align: right;
    line-height: 42px;
}
.volume label span {
    width: 50px;
}
.percents {
    display: flex;
    flex-wrap: wrap;
    gap: 17px;
    margin: 0 -30px 0 85px;
}
.percents button {
    height: 50px;
    padding: 0 15px;
    background: #141414;
    border: 2px solid #434343;
    border-radius: 4px;
    color: #434343;
}
.ticket .vscroll {
    flex: none;
    height: 403px;
    margin: 35px 8px 0 0;
}
.ticket-buttons {
    width: 84px;
    display: flex;
    flex-direction: column;
    gap: 17px;
}
.ticket-buttons .btn {
    flex: 1;
    padding: 0 26px;
    white-space: normal;
}
.ticket-buttons .split {
    flex: none;
    height: 135px;
}

/* 标注 */
.mark {
    position: absolute;
    border: 8px solid #ed1c24;
    border-radius: 4px;
    pointer-events: none;
}
.mark-parent {
    inset: -5px 11px 4px -17px;
}
.mark-child {
    inset: 2px -1px -19px -6px;
}
.mark-text {
    position: absolute;
    top: 11px;
    color: #ed1c24;
    font-size: 31px;
}
.mark-text-parent {
    left: 300px;
}
.mark-text-child {
    left: 531px;
}

.statusbar {
    flex: none;
    height: 54px;
    display: flex;
    align-items: center;
    justify-content: flex-end;
    gap: 36px;
    padding-right: 33px;
    color: #faad14;
    font-weight: 700;
}
.statusbar a {
    display: flex;
    align-items: center;
    gap: 10px;
}
.statusbar svg {
    width: 24px;
    height: 24px;
    fill: none;
    stroke: currentColor;
    stroke-width: 2;
}
```
